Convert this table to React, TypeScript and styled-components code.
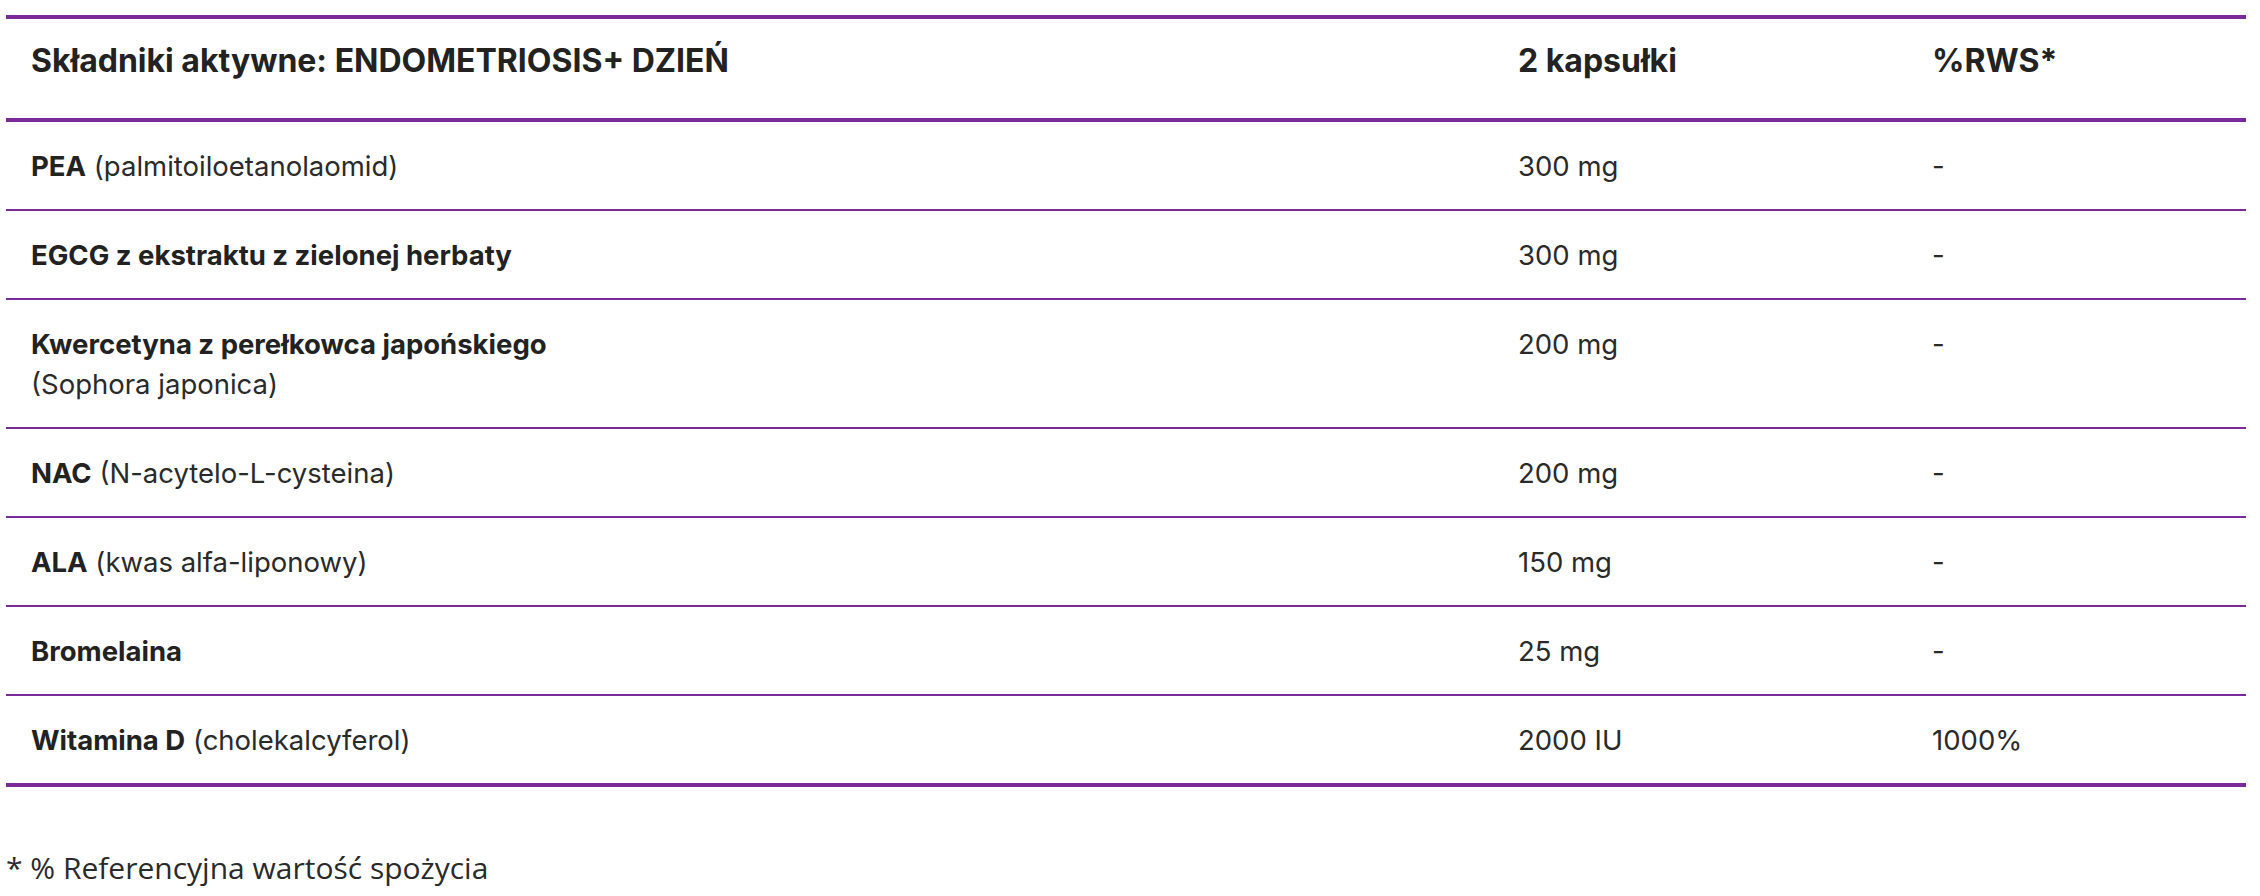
import styled, { createGlobalStyle } from "styled-components";

const GlobalStyle = createGlobalStyle`
  body {
    margin: 0;
    background: #ffffff;
    color: #222222;
    font-family: Inter, "Noto Sans", sans-serif;
  }
`;

const Page = styled.div`
  padding: 15px 14px 0 6px;
`;

const Table = styled.div`
  border-top: 4px solid #7b2a9b;
  border-bottom: 4px solid #7b2a9b;
`;

const Row = styled.div<{ head?: boolean }>`
  display: grid;
  grid-template-columns: 1487px 414px 1fr;
  border-bottom: ${(p) => (p.head ? "4px" : "2px")} solid #7b2a9b;

  &:last-child {
    border-bottom: none;
  }
`;

const HeadCell = styled.div`
  padding: 19px 25px 35px;
  font-size: 32px;
  line-height: 45px;
  font-weight: 700;
  color: #222222;
`;

const Cell = styled.div`
  padding: 24px 25px 23px;
  font-size: 27.5px;
  line-height: 40px;
  color: #2a2a2a;

  b {
    font-weight: 700;
    color: #222222;
  }
`;

const Note = styled.p`
  margin: 60px 0 0;
  font-family: "Open Sans", "Noto Sans", sans-serif;
  font-size: 30px;
  color: #2a2a2a;
`;

type Ingredient = {
  name: string;
  extra?: string;
  breakLine?: boolean;
  amount: string;
  rws: string;
};

const ingredients: Ingredient[] = [
  { name: "PEA", extra: "(palmitoiloetanolaomid)", amount: "300 mg", rws: "-" },
  { name: "EGCG z ekstraktu z zielonej herbaty", amount: "300 mg", rws: "-" },
  {
    name: "Kwercetyna z perełkowca japońskiego",
    extra: "(Sophora japonica)",
    breakLine: true,
    amount: "200 mg",
    rws: "-",
  },
  { name: "NAC", extra: "(N-acytelo-L-cysteina)", amount: "200 mg", rws: "-" },
  { name: "ALA", extra: "(kwas alfa-liponowy)", amount: "150 mg", rws: "-" },
  { name: "Bromelaina", amount: "25 mg", rws: "-" },
  { name: "Witamina D", extra: "(cholekalcyferol)", amount: "2000 IU", rws: "1000%" },
];

export default function App() {
  return (
    <>
      <GlobalStyle />
      <Page>
        <Table>
          <Row head>
            <HeadCell>Składniki aktywne: ENDOMETRIOSIS+ DZIEŃ</HeadCell>
            <HeadCell>2 kapsułki</HeadCell>
            <HeadCell>%RWS*</HeadCell>
          </Row>
          {ingredients.map((item) => (
            <Row key={item.name}>
              <Cell>
                <b>{item.name}</b>
                {item.extra && (item.breakLine ? <br /> : " ")}
                {item.extra}
              </Cell>
              <Cell>{item.amount}</Cell>
              <Cell>{item.rws}</Cell>
            </Row>
          ))}
        </Table>
        <Note>* % Referencyjna wartość spożycia</Note>
      </Page>
    </>
  );
}
